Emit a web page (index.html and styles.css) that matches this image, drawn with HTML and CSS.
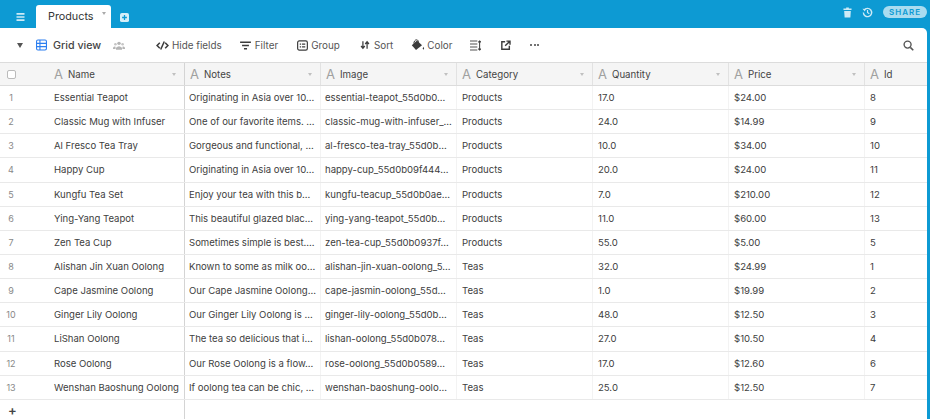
FILE: index.html
```html
<!DOCTYPE html>
<html lang="en">
<head>
<meta charset="utf-8">
<title>Products</title>
<link rel="stylesheet" href="styles.css">
</head>
<body>
<header class="topbar">
  <svg class="menu-icon" viewBox="0 0 10 9"><path d="M.5 1h9M.5 4.500h9M.5 8h9" stroke="#cdeaf6" stroke-width="1.800" fill="none"/></svg>
  <div class="tab">Products<span class="caret small"></span></div>
  <svg class="add-icon" viewBox="0 0 12 12"><rect width="12" height="12" rx="2.500" fill="#d4eef8"/><path d="M6 2.800v6.400M2.800 6h6.400" stroke="#0d9ad3" stroke-width="1.700"/></svg>
  <div class="top-right">
    <svg class="trash" viewBox="0 0 10 12"><path d="M3.500 .5h3v1H9.500v1.800H.5V1.500h3zM1.300 4.200h7.400l-.5 7.300H1.800z" fill="#cdeaf6"/></svg>
    <svg class="hist" viewBox="0 0 12 12"><path d="M2.300 3.400A4.500 4.500 0 1 1 1.500 6" stroke="#cdeaf6" stroke-width="1.500" fill="none"/><path d="M.5 2l3.500.2-.8 2.800z" fill="#cdeaf6"/><path d="M6 3.200V6l2 1.300" stroke="#cdeaf6" stroke-width="1.300" fill="none"/></svg>
    <div class="share">SHARE</div>
  </div>
</header>
<main class="card">
  <div class="toolbar">
    <span class="caret view"></span>
    <svg class="grid-icon" viewBox="0 0 12 12"><rect x=".6" y=".6" width="10.800" height="10.800" rx="1.500" fill="none" stroke="#2d7ff0" stroke-width="1.200"/><path d="M.6 4.200h10.800M.6 7.800h10.800M4.300.6v10.800" stroke="#2d7ff0" stroke-width="1.200"/></svg>
    <span class="view-name">Grid view</span>
    <svg class="people" viewBox="0 0 14 10"><circle cx="7" cy="2.500" r="2" fill="#b5b5b5"/><circle cx="2.800" cy="3.500" r="1.500" fill="#c5c5c5"/><circle cx="11.200" cy="3.500" r="1.500" fill="#c5c5c5"/><path d="M3.500 10V7.500Q7 4 10.500 7.500V10zM0 9V7.500Q1.500 5.500 3 6.500V9zM14 9V7.500Q12.500 5.500 11 6.500V9z" fill="#b5b5b5"/></svg>
    <div class="tool hide"><svg viewBox="0 0 14 10"><path d="M4 2 1 5l3 3M10 2l3 3-3 3M9 .5 5 9.500" stroke="#3c3c3c" stroke-width="1.700" fill="none"/></svg>Hide fields</div>
    <div class="tool filter"><svg viewBox="0 0 12 10"><path d="M0 1.300h12M2.200 5h7.600M4.300 8.700h3.400" stroke="#3c3c3c" stroke-width="1.700" fill="none"/></svg>Filter</div>
    <div class="tool group"><svg viewBox="0 0 12 12"><rect x=".7" y="1" width="10.600" height="10" rx="1.800" fill="none" stroke="#3c3c3c" stroke-width="1.300"/><path d="M3 4.500h1.500M5.500 4.500H9M3 7.500h1.500M5.500 7.500H9" stroke="#3c3c3c" stroke-width="1.200"/></svg>Group</div>
    <div class="tool sort"><svg viewBox="0 0 12 11"><path d="M3.500 1v8M1.300 6.700l2.200 2.800 2.200-2.800M8.500 10V2M6.300 4.300l2.200-2.800 2.200 2.800" stroke="#3c3c3c" stroke-width="1.500" fill="none"/></svg>Sort</div>
    <div class="tool color"><svg viewBox="0 0 14 12"><path d="M6 1.500.8 6.300 5 11l6-4.700z" fill="#3c3c3c"/><path d="M2.800 4.500C3 2.500 4 .8 5.500.8s2.200 1.500 2 3" stroke="#3c3c3c" stroke-width="1" fill="none"/><path d="M12.400 7.800q1.500 2 0 3-1.500-1 0-3z" fill="#3c3c3c"/></svg>Color</div>
    <svg class="tool-icon density" viewBox="0 0 12 12"><path d="M0 1.200h8M0 4.400h8M0 7.600h8M0 10.800h8" stroke="#555" stroke-width="1.100" fill="none"/><path d="M10.500 1v10M9 2.500l1.500-1.500L12 2.500M9 9.500l1.500 1.500L12 9.500" stroke="#3c3c3c" stroke-width="1.100" fill="none"/></svg>
    <svg class="tool-icon external" viewBox="0 0 12 12"><path d="M5 2H1v9h9V7" stroke="#3c3c3c" stroke-width="1.700" fill="none"/><path d="M5 7l5-5M6.500 1.300h4.300v4.300" stroke="#3c3c3c" stroke-width="1.700" fill="none"/></svg>
    <div class="dots"><i></i><i></i><i></i></div>
    <svg class="search" viewBox="0 0 12 12"><circle cx="5" cy="5" r="3.800" fill="none" stroke="#555" stroke-width="1.500"/><path d="m8 8 3.200 3.200" stroke="#555" stroke-width="1.700"/></svg>
  </div>
  <div class="table">
    <div class="row head">
      <div class="cell first"><span class="check"></span><span class="fname"><b>A</b>Name</span><span class="caret tiny"></span></div>
      <div class="cell"><span class="fname"><b>A</b>Notes</span><span class="caret tiny"></span></div>
      <div class="cell"><span class="fname"><b>A</b>Image</span><span class="caret tiny"></span></div>
      <div class="cell"><span class="fname"><b>A</b>Category</span><span class="caret tiny"></span></div>
      <div class="cell"><span class="fname"><b>A</b>Quantity</span><span class="caret tiny"></span></div>
      <div class="cell"><span class="fname"><b>A</b>Price</span><span class="caret tiny"></span></div>
      <div class="cell"><span class="fname"><b>A</b>Id</span></div>
    </div>
    <div class="row"><div class="cell first"><span class="num">1</span>Essential Teapot</div><div class="cell">Originating in Asia over 10...</div><div class="cell">essential-teapot_55d0b0...</div><div class="cell">Products</div><div class="cell">17.0</div><div class="cell">$24.00</div><div class="cell">8</div></div>
    <div class="row"><div class="cell first"><span class="num">2</span>Classic Mug with Infuser</div><div class="cell">One of our favorite items. ...</div><div class="cell">classic-mug-with-infuser_...</div><div class="cell">Products</div><div class="cell">24.0</div><div class="cell">$14.99</div><div class="cell">9</div></div>
    <div class="row"><div class="cell first"><span class="num">3</span>Al Fresco Tea Tray</div><div class="cell">Gorgeous and functional, ...</div><div class="cell">al-fresco-tea-tray_55d0b...</div><div class="cell">Products</div><div class="cell">10.0</div><div class="cell">$34.00</div><div class="cell">10</div></div>
    <div class="row"><div class="cell first"><span class="num">4</span>Happy Cup</div><div class="cell">Originating in Asia over 10...</div><div class="cell">happy-cup_55d0b09f444...</div><div class="cell">Products</div><div class="cell">20.0</div><div class="cell">$24.00</div><div class="cell">11</div></div>
    <div class="row"><div class="cell first"><span class="num">5</span>Kungfu Tea Set</div><div class="cell">Enjoy your tea with this b...</div><div class="cell">kungfu-teacup_55d0b0ae...</div><div class="cell">Products</div><div class="cell">7.0</div><div class="cell">$210.00</div><div class="cell">12</div></div>
    <div class="row"><div class="cell first"><span class="num">6</span>Ying-Yang Teapot</div><div class="cell">This beautiful glazed blac...</div><div class="cell">ying-yang-teapot_55d0b...</div><div class="cell">Products</div><div class="cell">11.0</div><div class="cell">$60.00</div><div class="cell">13</div></div>
    <div class="row"><div class="cell first"><span class="num">7</span>Zen Tea Cup</div><div class="cell">Sometimes simple is best....</div><div class="cell">zen-tea-cup_55d0b0937f...</div><div class="cell">Products</div><div class="cell">55.0</div><div class="cell">$5.00</div><div class="cell">5</div></div>
    <div class="row"><div class="cell first"><span class="num">8</span>Alishan Jin Xuan Oolong</div><div class="cell">Known to some as milk oo...</div><div class="cell">alishan-jin-xuan-oolong_5...</div><div class="cell">Teas</div><div class="cell">32.0</div><div class="cell">$24.99</div><div class="cell">1</div></div>
    <div class="row"><div class="cell first"><span class="num">9</span>Cape Jasmine Oolong</div><div class="cell">Our Cape Jasmine Oolong...</div><div class="cell">cape-jasmin-oolong_55d...</div><div class="cell">Teas</div><div class="cell">1.0</div><div class="cell">$19.99</div><div class="cell">2</div></div>
    <div class="row"><div class="cell first"><span class="num">10</span>Ginger Lily Oolong</div><div class="cell">Our Ginger Lily Oolong is ...</div><div class="cell">ginger-lily-oolong_55d0b...</div><div class="cell">Teas</div><div class="cell">48.0</div><div class="cell">$12.50</div><div class="cell">3</div></div>
    <div class="row"><div class="cell first"><span class="num">11</span>LiShan Oolong</div><div class="cell">The tea so delicious that i...</div><div class="cell">lishan-oolong_55d0b078...</div><div class="cell">Teas</div><div class="cell">27.0</div><div class="cell">$10.50</div><div class="cell">4</div></div>
    <div class="row"><div class="cell first"><span class="num">12</span>Rose Oolong</div><div class="cell">Our Rose Oolong is a flow...</div><div class="cell">rose-oolong_55d0b0589...</div><div class="cell">Teas</div><div class="cell">17.0</div><div class="cell">$12.60</div><div class="cell">6</div></div>
    <div class="row"><div class="cell first"><span class="num">13</span>Wenshan Baoshung Oolong</div><div class="cell">If oolong tea can be chic, ...</div><div class="cell">wenshan-baoshung-oolo...</div><div class="cell">Teas</div><div class="cell">25.0</div><div class="cell">$12.50</div><div class="cell">7</div></div>
    <div class="row add"><div class="cell first"><span class="plus">+</span></div><div class="cell"></div></div>
  </div>
</main>
</body>
</html>
```
FILE: styles.css
```css
* { box-sizing: border-box; }
html, body { margin: 0; height: 100%; overflow: hidden; }
body { background: #0d9ad3; font-family: "Inter", "Liberation Sans", sans-serif; font-size: 9.550px; color: #404040; display: flex; flex-direction: column; }
svg { display: block; flex: none; }

.topbar { height: 28px; flex: none; display: flex; align-items: flex-end; padding-left: 16px; }
.menu-icon { width: 9px; height: 8px; margin-bottom: 7px; }
.tab { width: 75px; height: 23px; margin-left: 11px; background: #fff; border-radius: 3px 3px 0 0; display: flex; align-items: center; padding: 0 0 0 12px; font-size: 10.800px; color: #333; }
.add-icon { width: 9px; height: 9px; margin: 0 0 6px 9px; }
.top-right { margin-left: auto; display: flex; align-items: center; height: 28px; padding-right: 3px; padding-bottom: 4px; }
.trash { width: 9px; height: 11px; margin-right: 10px; }
.hist { width: 11px; height: 11px; margin-right: 10px; }
.share { width: 44px; height: 12px; border-radius: 6px; background: #a9dcf0; color: #0d9ad3; font-size: 8px; font-weight: 600; letter-spacing: 1px; text-align: center; line-height: 12px; }

.caret { display: block; width: 0; height: 0; border-style: solid; border-color: #888 transparent transparent; flex: none; }
.caret.small { border-width: 3px 2px 0; margin: -6px 0 0 8px; border-top-color: #aaa; }
.caret.view { border-width: 5px 3.500px 0; border-top-color: #555; margin: 0 13px 0 17px; }
.caret.tiny { border-width: 3px 2.500px 0; border-top-color: #c0c0c0; margin-left: auto; }

.card { flex: 1; min-height: 0; margin-right: 3px; background: #fff; border-radius: 0 5px 0 0; display: flex; flex-direction: column; }
.toolbar { height: 34px; flex: none; display: flex; align-items: center; color: #444; }
.grid-icon { width: 11px; height: 12px; }
.view-name { font-size: 10.700px; font-weight: 500; margin-left: 6px; color: #444; width: 48px; white-space: nowrap; }
.people { width: 12px; height: 9px; margin-left: 12px; }
.tool { display: flex; align-items: center; white-space: nowrap; font-size: 9.900px; color: #555; }
.tool svg { margin-right: 3px; }
.hide { margin-left: 31px; } .hide svg { width: 13px; height: 9px; }
.filter { margin-left: 18px; } .filter svg { width: 11px; height: 9px; margin-right: 4px; }
.group { margin-left: 19px; } .group svg { width: 11px; height: 11px; }
.sort { margin-left: 20px; } .sort svg { width: 10px; height: 10px; margin-right: 4px; }
.color { margin-left: 18px; } .color svg { width: 14px; height: 12px; margin-right: 2px; }
.tool-icon { width: 11px; height: 11px; }
.density { margin-left: 18px; }
.external { margin-left: 20px; width: 10px; height: 10px; }
.dots { display: flex; gap: 1.500px; margin-left: 19px; }
.dots i { width: 2px; height: 2px; border-radius: 50%; background: #444; }
.search { width: 11px; height: 11px; margin-left: auto; margin-right: 13px; }

.table { flex: 1; min-height: 0; border-top: 1px solid #dcdcdc; }
.row { height: 24.150px; display: grid; grid-template-columns: 185px repeat(5, 136px) 62px; border-bottom: 1px solid #e9e9e9; }
.head { height: 23px; background: #f5f5f5; border-bottom-color: #dcdcdc; }
.cell { padding-left: 4px; display: flex; align-items: center; white-space: nowrap; overflow: hidden; border-right: 1px solid #f3f3f3; padding-right: 4px; }
.cell:nth-child(n+4) { padding-left: 5px; }
.cell.first { border-right-color: #d4d4d4; padding-left: 0; }
.cell:last-child { border-right: 0; }
.head .cell { border-right-color: #e2e2e2; padding-left: 5px; padding-right: 8px; font-size: 9.700px; }
.head .cell.first { border-right-color: #d4d4d4; padding-left: 7px; }
.fname { display: flex; align-items: center; color: #444; }
.fname b { font-weight: 400; font-size: 13px; color: #a0a0a0; margin-right: 5px; }
.head .first .fname { margin-left: 38px; }
.check { width: 9px; height: 9px; border: 1px solid #bbb; border-radius: 2px; background: #fff; flex: none; }
.num { width: 54px; padding-right: 32px; text-align: center; color: #888; font-size: 9px; flex: none; }
.add { height: 21px; border-bottom: 0; }
.plus { padding-left: 8px; font-size: 13px; font-weight: 600; color: #444; }
```
